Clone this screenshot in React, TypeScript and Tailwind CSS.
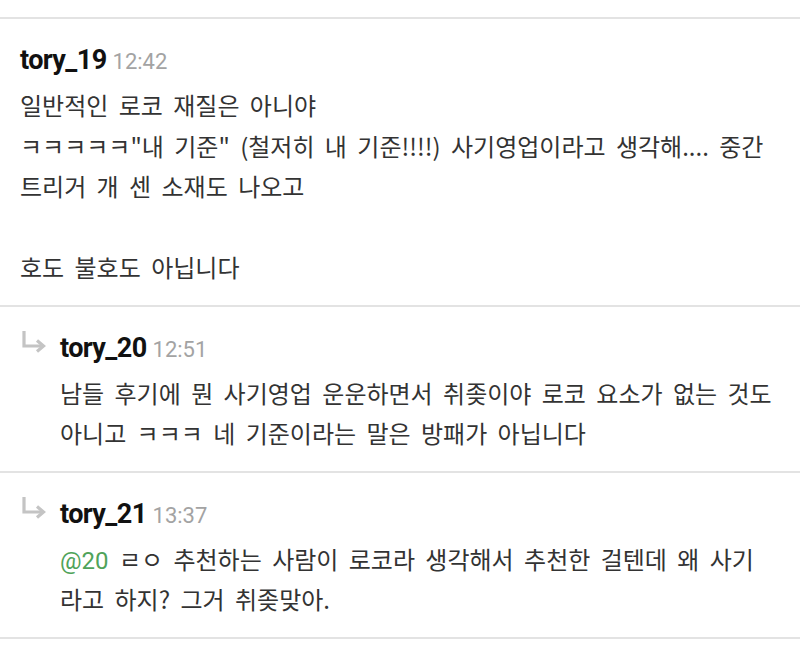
type Comment = {
  id: number;
  name: string;
  time: string;
  reply?: boolean;
  mention?: string;
  lines: string[];
};

const comments: Comment[] = [
  {
    id: 19,
    name: "tory_19",
    time: "12:42",
    lines: [
      "일반적인 로코 재질은 아니야",
      'ㅋㅋㅋㅋㅋ"내 기준" (철저히 내 기준!!!!) 사기영업이라고 생각해.... 중간',
      "트리거 개 센 소재도 나오고",
      "",
      "호도 불호도 아닙니다",
    ],
  },
  {
    id: 20,
    name: "tory_20",
    time: "12:51",
    reply: true,
    lines: [
      "남들 후기에 뭔 사기영업 운운하면서 취좆이야 로코 요소가 없는 것도",
      "아니고 ㅋㅋㅋ 네 기준이라는 말은 방패가 아닙니다",
    ],
  },
  {
    id: 21,
    name: "tory_21",
    time: "13:37",
    reply: true,
    mention: "@20",
    lines: [" ㄹㅇ 추천하는 사람이 로코라 생각해서 추천한 걸텐데 왜 사기", "라고 하지? 그거 취좆맞아."],
  },
];

const ReplyArrow = () => (
  <svg width="26" height="26" viewBox="0 0 26 26" className="shrink-0">
    <path d="M4 1 V16 H21" fill="none" stroke="#c4c4c4" strokeWidth="3.2" />
    <path d="M17 10.5 L23.5 16 L17 21.5" fill="none" stroke="#c4c4c4" strokeWidth="3.2" />
  </svg>
);

const CommentItem = ({ c }: { c: Comment }) => {
  return (
    <div className="border-b-2 border-[#e3e3e3] pl-5 pr-4 pt-[23px] pb-[17px]">
      <div className="flex gap-[14px]">
        {c.reply && <ReplyArrow />}
        <div className="flex flex-col">
          <div className="flex items-baseline gap-[6px] leading-[36px] font-['Roboto',sans-serif]">
            <span className="text-[27px] font-bold tracking-[-0.6px] text-[#111]">{c.name}</span>
            <span className="text-[22px] text-[#a3a3a3]">{c.time}</span>
          </div>
          <div className="mt-[5px] text-[24px] leading-[40.5px] text-[#333] [word-spacing:5px]">
            {c.lines.map((line, i) => (
              <div key={i} className="h-[40.5px] whitespace-pre">
                {i === 0 && c.mention && (
                  <span className="text-[#4fa35a] font-['Roboto',sans-serif]">{c.mention}</span>
                )}
                {line}
              </div>
            ))}
          </div>
        </div>
      </div>
    </div>
  );
};

export default function App() {
  return (
    <div
      className="w-[800px] h-[651px] overflow-hidden bg-white"
      style={{ fontFamily: '"Noto Sans CJK KR", "Noto Sans", sans-serif' }}
    >
      <div className="h-[19px] border-b-2 border-[#e3e3e3]" />
      {comments.map((c) => (
        <CommentItem key={c.id} c={c} />
      ))}
    </div>
  );
}
